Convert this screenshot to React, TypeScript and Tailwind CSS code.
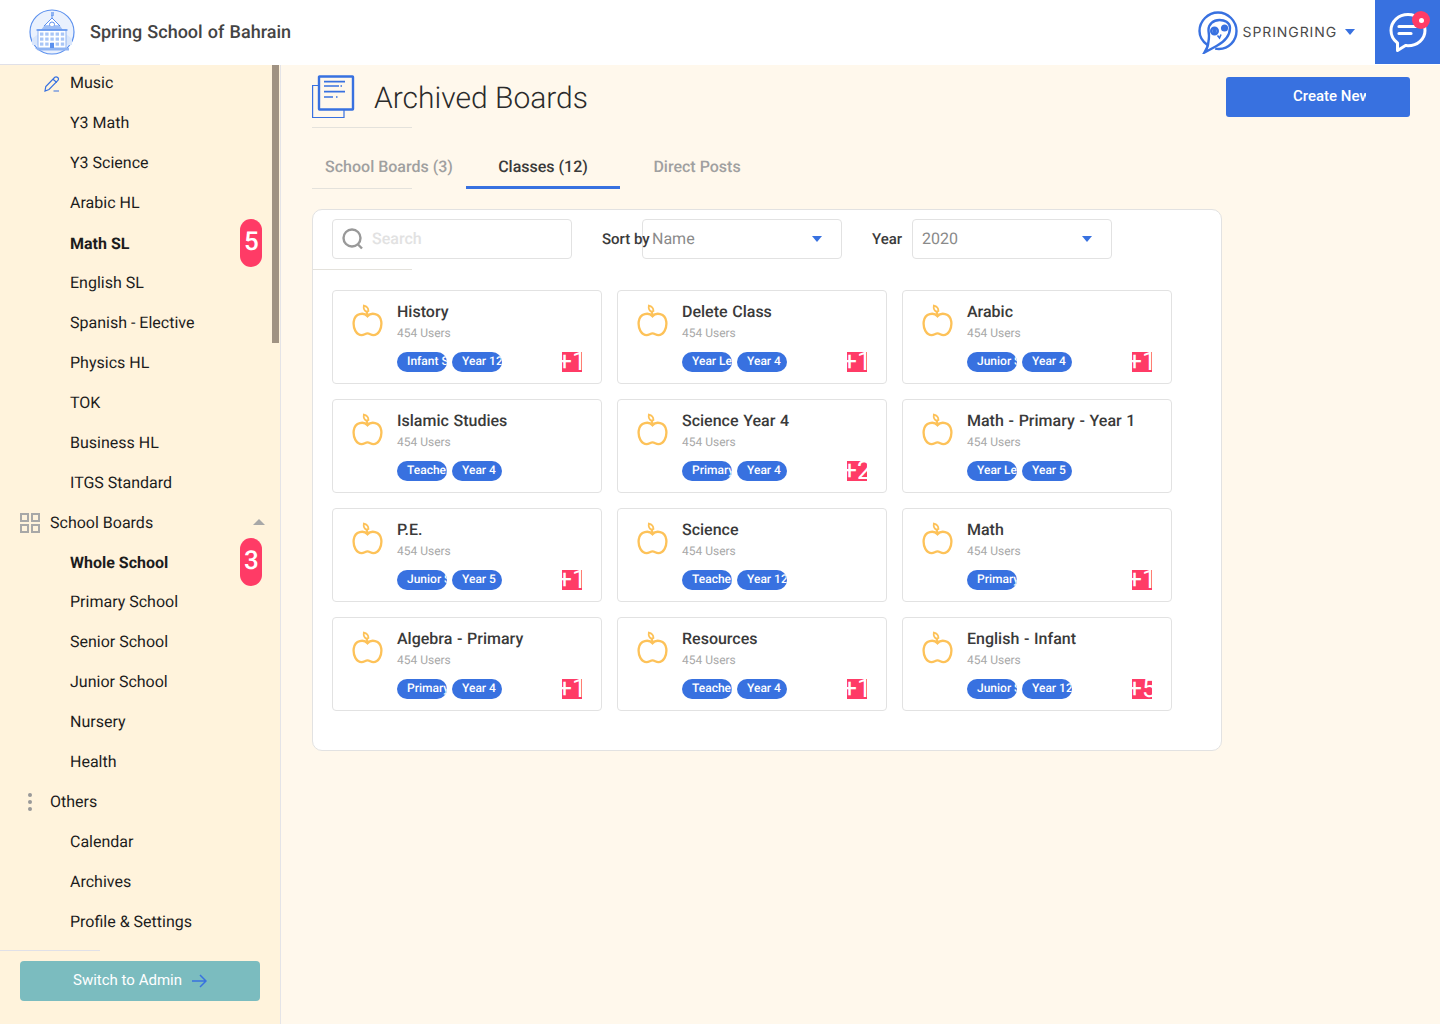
import React from "react";

const Apple = () => (
  <svg width="31" height="35" viewBox="0 0 32 36" fill="none" stroke="#fdc259" strokeWidth="2.4" className="mt-[2px] shrink-0">
    <path d="M16 12.5C12.5 8.5 3 9 1.800 18c-.9 7 2.700 14 8.200 14 2.600 0 3.700-1.700 6-1.700s3.400 1.700 6 1.700c5.500 0 9.100-7 8.200-14C29 9 19.500 8.500 16 12.500Z" />
    <path d="M16 12.500c0 0 .3-2.500-1-4.500" />
    <path d="M15 7.800C12.600 6.800 11.800 4 12.200 1.600c2.500.6 4.800 2.800 4.800 5.600-.6.300-1.300.5-2 .6Z" strokeWidth="1.800" />
  </svg>
);

const Caret = ({ color = "#3871e0" }: { color?: string }) => (
  <span className="block h-0 w-0 border-x-[5px] border-t-[6px] border-x-transparent" style={{ borderTopColor: color }} />
);

const SchoolLogo = () => (
  <svg width="46" height="46" viewBox="0 0 46 46" fill="none" className="shrink-0">
    <circle cx="23" cy="23" r="22" fill="#eaf1fd" stroke="#5b90ee" strokeWidth="1.200" />
    <path d="M3 30c6-6 13-8 20-8s14 2 20 8v6H3z" fill="#d9e6fb" />
    <path d="M22 3h3v4h-3z" fill="#8fb4f3" />
    <path d="M23 6v5" stroke="#5b90ee" />
    <path d="M15 17l8-8 8 8z" fill="#fff" stroke="#5b90ee" />
    <circle cx="23" cy="15.500" r="2.500" fill="#fff" stroke="#5b90ee" />
    <path d="M12 21l3-4h16l3 4z" fill="#9cbdf5" />
    <rect x="9" y="21" width="28" height="18" fill="#fff" stroke="#8fb4f3" />
    <path d="M7.500 21h31" stroke="#5b90ee" strokeWidth="1.500" />
    <g fill="#a9c6f7">
      {[0, 1, 2, 3, 4].map((c) =>
        [0, 1, 2].map((r) => <rect key={`${c}${r}`} x={11 + c * 5.200} y={23.500 + r * 5} width="3.400" height="3.200" />)
      )}
    </g>
    <rect x="21" y="34" width="4" height="5" fill="#5b90ee" />
    <path d="M6 39h34v2.500H9z" fill="#8fb4f3" />
  </svg>
);

const Owl = () => (
  <svg width="40" height="43" viewBox="0 0 40 43" fill="none" stroke="#3871e0" strokeWidth="2.400" className="shrink-0">
    <path d="M9.500 34C4.500 30.500 1.500 25.500 1.500 20 1.500 10 10 1.500 20 1.500S38.500 10 38.500 20c0 9.800-7.800 18-17.500 18-1.300 0-2.600-.1-3.800-.4" />
    <path d="M6.500 41.500c2.200-3.500 3.200-5.500 3.500-8 .4-3 1-5 1-8.500 0-2-.5-4-.5-6 0-5.500 4.500-10 11-10 3 0 5.500.8 7 1.800 2 1.300 3.500 3.200 3.500 6 0 8.500-6.500 14.500-13.500 18.200Z" />
    <circle cx="16.500" cy="20" r="3.300" />
    <circle cx="26.500" cy="17" r="2.400" />
    <circle cx="16.500" cy="20" r="1" fill="#3871e0" />
    <circle cx="26.500" cy="17" r=".9" fill="#3871e0" />
    <path d="M19.500 24.500l2 2.500 1.500-3.500" strokeWidth="1.600" />
  </svg>
);

const ChatIcon = () => (
  <svg width="38" height="42" viewBox="0 0 38 42" fill="none" stroke="#fff" strokeWidth="3" strokeLinecap="round" strokeLinejoin="round">
    <path d="M19 2.500C9.500 2.500 2 9.500 2 18.500c0 5.500 2.500 9.500 6.500 12.500V38.500l8-5c1 .1 1.700.2 2.500.2 9.500 0 17-6.700 17-15.200C36 9.500 28.500 2.500 19 2.500Z" />
    <path d="M10 14.500h16.500M10 21.500h12" strokeWidth="3.200" />
  </svg>
);

const BoardsIcon = () => (
  <svg width="44" height="44" viewBox="0 0 44 44" fill="none" stroke="#3871e0" className="shrink-0">
    <path d="M6.500 10.500H.6v32h31.400v-8" strokeWidth="1.200" />
    <rect x="7" y="1.500" width="34" height="33" strokeWidth="2.400" rx=".5" />
    <path d="M12 6.700h21M12 11h15M12 16.700h21M12 22h9" strokeWidth="1.700" />
    <path d="M28.500 11h1.500M24 22h1.500" strokeWidth="1.700" />
  </svg>
);

const Grid = () => (
  <svg width="20" height="20" viewBox="0 0 20 20" fill="none" stroke="#a8a8a8" strokeWidth="2" className="shrink-0">
    <rect x="1" y="1" width="7" height="7" />
    <rect x="12" y="1" width="7" height="7" />
    <rect x="1" y="12" width="7" height="7" />
    <rect x="12" y="12" width="7" height="7" />
  </svg>
);

const Pencil = () => (
  <svg width="16" height="16" viewBox="0 0 16 16" fill="none" stroke="#3871e0" strokeWidth="1.200" className="shrink-0">
    <path d="M1 15l.8-4.500L10.800 1.300c.9-.8 2-.6 2.900.2s1.100 2 .2 2.900L5 13.500 1 15Z" />
    <path d="M9 3.200l3.800 3.300M9.500 15H15" />
  </svg>
);

const Row = ({ label, bold, badge, top }: { label: string; bold?: boolean; badge?: string; top?: boolean }) => (
  <div className={`relative flex ${top ? "h-[39px]" : "h-10"} items-center pl-[70px] text-base text-[#1c1c1c] ${bold ? "font-bold" : ""} ${bold && !top ? "pt-[2px]" : ""}`}>
    {label}
    {badge && (
      <span className={`absolute left-[240px] ${top ? "top-[-5px]" : "top-[-4px]"} flex h-12 w-[22px] items-center justify-center rounded-[11px] bg-[#ff3b66] pb-px pl-px text-[26px] font-medium text-white`}>
        {badge}
      </span>
    )}
  </div>
);

const Pill = ({ text }: { text: string }) => (
  <span className="block h-5 w-[50px] overflow-hidden whitespace-nowrap rounded-[10px] bg-[#3871e0] pl-[10px] text-xs font-medium leading-[18px] text-white">
    {text}
  </span>
);

const Card = ({ title, tags, count }: { title: string; tags: string[]; count?: string }) => (
  <div className="relative flex h-[94px] w-[270px] rounded border border-[#e2e2e2] bg-white pl-[19px] pt-[11px]">
    <Apple />
    <div className="ml-[14px] min-w-0">
      <div className="text-base font-medium leading-5 text-[#3a3a3a] [word-spacing:0.7px]">{title}</div>
      <div className="mt-px text-xs leading-[20px] text-[#a8a8a8]">454 Users</div>
      <div className="mt-[9px] flex gap-[5px]">
        {tags.map((t) => (
          <Pill key={t} text={t} />
        ))}
      </div>
    </div>
    {count && (
      <span className="absolute left-[229px] top-[61px] flex h-5 w-5 items-center justify-center overflow-hidden whitespace-nowrap bg-[#ff3b66] text-[26px] font-normal leading-5 text-white">
        {count}
      </span>
    )}
  </div>
);

const cards = [
  { title: "History", tags: ["Infant School", "Year 12"], count: "+1" },
  { title: "Delete Class", tags: ["Year Level", "Year 4"], count: "+1" },
  { title: "Arabic", tags: ["Junior School", "Year 4"], count: "+1" },
  { title: "Islamic Studies", tags: ["Teachers", "Year 4"] },
  { title: "Science Year 4", tags: ["Primary", "Year 4"], count: "+2" },
  { title: "Math - Primary - Year 1", tags: ["Year Level", "Year 5"] },
  { title: "P.E.", tags: ["Junior School", "Year 5"], count: "+1" },
  { title: "Science", tags: ["Teachers", "Year 12"] },
  { title: "Math", tags: ["Primary"], count: "+1" },
  { title: "Algebra - Primary", tags: ["Primary", "Year 4"], count: "+1" },
  { title: "Resources", tags: ["Teachers", "Year 4"], count: "+1" },
  { title: "English - Infant", tags: ["Junior School", "Year 12"], count: "+5" },
];

const Select = ({ value }: { value: string }) => (
  <div className="flex h-10 w-[200px] items-center justify-between rounded border border-[#e2e2e2] bg-white pl-[9px] pr-[19px] text-base text-[#8a8a8a]">
    {value}
    <Caret />
  </div>
);

export default function App() {
  return (
    <div className="flex h-[1024px] w-[1440px] flex-col overflow-hidden bg-[#fff8ec] font-['Roboto',sans-serif] [text-rendering:geometricPrecision]">
      <header className="flex h-[65px] shrink-0 items-start bg-white">
        <div className="mt-[9px] ml-[29px]"><SchoolLogo /></div>
        <div className="ml-[15px] mt-[21px] text-lg font-medium leading-6 text-[#444] [word-spacing:0.7px]">Spring School of Bahrain</div>
        <div className="ml-auto mt-[11px]"><Owl /></div>
        <div className="ml-[5px] mt-[23px] font-['Inter',sans-serif] text-sm leading-5 tracking-[0.9px] text-[#4a4a4a]">SPRINGRING</div>
        <div className="ml-[8px] mt-[29px]"><Caret /></div>
        <div className="relative ml-[20px] flex h-16 w-[65px] items-center justify-center bg-[#3871e0]">
          <div className="mt-[2px]"><ChatIcon /></div>
          <span className="absolute left-[37px] top-[11px] flex h-[18px] w-[18px] items-center justify-center rounded-full bg-[#ff3b66]">
            <span className="h-[5px] w-[5px] rounded-full bg-white" />
          </span>
        </div>
      </header>
      <div className="flex min-h-0 flex-1">
        <aside className="relative flex w-[281px] shrink-0 flex-col border-r border-[#e4e4e8] bg-[#fff3dc]">
          <div className="absolute left-[272px] top-0 h-[278px] w-[7px] bg-[#a09282]" />
          <div className="absolute left-0 top-[-1px] h-px w-[100px] bg-[#e0e0e8]" />
          <div className="relative -mt-px flex h-[39px] items-center pb-[2px] text-base text-[#1c1c1c]">
            <span className="absolute left-[44px] top-[12px]"><Pencil /></span>
            <span className="pl-[70px]">Music</span>
          </div>
          <Row label="Y3 Math" />
          <Row label="Y3 Science" />
          <Row label="Arabic HL" />
          <Row label="Math SL" bold badge="5" />
          <Row label="English SL" />
          <Row label="Spanish - Elective" />
          <Row label="Physics HL" />
          <Row label="TOK" />
          <Row label="Business HL" />
          <Row label="ITGS Standard" />
          <div className="relative flex h-10 items-center pl-5 text-base text-[#1c1c1c]">
            <Grid />
            <span className="ml-[10px]">School Boards</span>
            <span className="absolute left-[253px] top-[16px] h-0 w-0 border-x-[6px] border-b-[6px] border-x-transparent border-b-[#a8a8a8]" />
          </div>
          <Row label="Whole School" bold badge="3" top />
          <Row label="Primary School" />
          <Row label="Senior School" />
          <Row label="Junior School" />
          <Row label="Nursery" />
          <Row label="Health" />
          <div className="flex h-10 items-center pl-[28px] text-base text-[#1c1c1c]">
            <span className="flex w-[6px] flex-col gap-[3px]">
              <span className="h-1 w-1 rounded-full bg-[#999]" />
              <span className="h-1 w-1 rounded-full bg-[#999]" />
              <span className="h-1 w-1 rounded-full bg-[#999]" />
            </span>
            <span className="ml-[16px]">Others</span>
          </div>
          <Row label="Calendar" />
          <Row label="Archives" />
          <Row label="Profile & Settings" />
          <div className="mt-[8px] h-px w-[100px] bg-[#e0e0e8]" />
          <button className="ml-5 mt-[10px] flex h-10 w-[240px] items-center justify-center gap-[9px] rounded bg-[#7bbcbf] pb-px text-[15px] text-white">
            Switch to Admin
            <svg width="16" height="14" viewBox="0 0 16 14" fill="none" stroke="#3871e0" strokeWidth="1.500"><path d="M1 7h14M9 1l6 6-6 6" /></svg>
          </button>
        </aside>
        <main className="relative min-w-0 flex-1 pl-[31px]">
          <div className="flex h-[62px] items-start">
            <div className="mt-[10px]"><BoardsIcon /></div>
            <h1 className="ml-[18px] mt-[14px] text-[30px] font-light leading-10 text-[#2b2b2b]">Archived Boards</h1>
            <button className="absolute left-[945px] top-[12px] h-10 w-[184px] rounded-[3px] bg-[#3871e0] pb-[2px] text-[15px] font-medium text-white">
              <span className="ml-[67px] block w-[73px] overflow-hidden whitespace-nowrap text-left">Create New</span>
            </button>
          </div>
          <div className="h-px w-[100px] bg-[#e4e2dc]" />
          <div className="relative flex h-[61px] text-base font-medium">
            <div className="flex w-[154px] items-center justify-center pt-[17px] text-[#a0a0a0]">School Boards (3)</div>
            <div className="flex w-[154px] items-center justify-center border-b-[3px] border-[#3871e0] pt-[20px] text-[#3a3a3a]">Classes (12)</div>
            <div className="flex w-[154px] items-center justify-center pt-[17px] text-[#a0a0a0]">Direct Posts</div>
            <div className="absolute left-0 top-[60px] h-px w-[100px] bg-[#e4e2dc]" />
          </div>
          <section className="mt-[20px] h-[542px] w-[910px] rounded-[10px] border border-[#e2e2e2] bg-white">
            <div className="flex items-center pl-[19px] pt-[9px]">
              <div className="flex h-10 w-[240px] items-center rounded border border-[#e2e2e2] bg-white pl-[9px]">
                <svg width="22" height="22" viewBox="0 0 22 22" fill="none" stroke="#999" strokeWidth="2.400"><circle cx="10" cy="10" r="8.500" /><path d="M16 16.500l4 4" /></svg>
                <span className="ml-[8px] text-base font-medium text-[#e2e2e2]">Search</span>
              </div>
              <span className="relative z-10 ml-[30px] w-10 whitespace-nowrap text-[15px] font-medium text-[#3a3a3a]">Sort by</span>
              <Select value="Name" />
              <span className="ml-[30px] w-10 text-[15px] font-medium text-[#3a3a3a]">Year</span>
              <Select value="2020" />
            </div>
            <div className="mt-[10px] h-px w-[99px] bg-[#e4e2dc]" />
            <div className="mt-[20px] grid grid-cols-[repeat(3,270px)] gap-[15px] pl-[19px]">
              {cards.map((c) => (
                <Card key={c.title} {...c} />
              ))}
            </div>
          </section>
        </main>
      </div>
    </div>
  );
}
